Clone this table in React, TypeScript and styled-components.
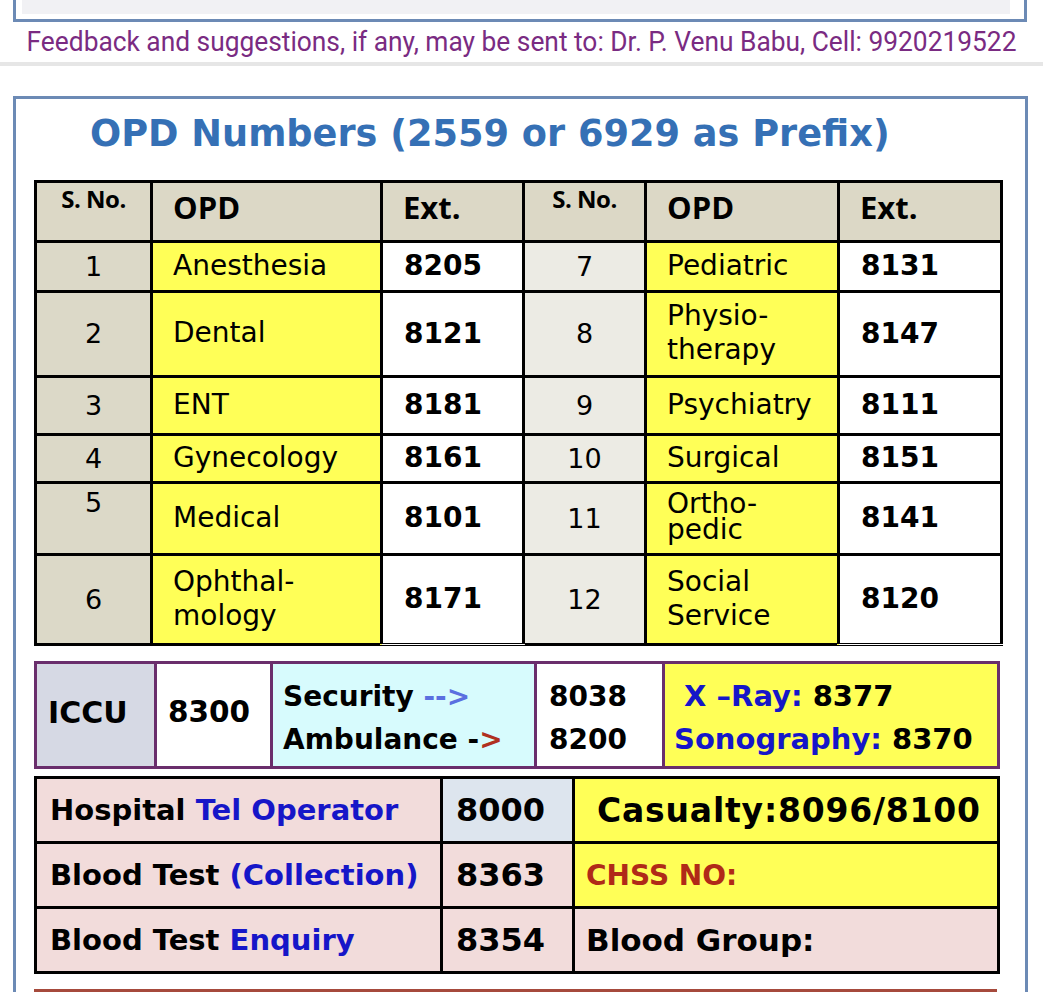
import React from "react";
import styled, { createGlobalStyle } from "styled-components";

const Global = createGlobalStyle`
  html, body {
    margin: 0;
    padding: 0;
    background: #ffffff;
    overflow: hidden;
  }
  body {
    font-family: "DejaVu Sans", Verdana, sans-serif;
    color: #000000;
  }
`;

const Page = styled.div`
  width: 1043px;
  height: 992px;
  overflow: hidden;
`;

const TopFrame = styled.div`
  margin: 0 16px 0 13px;
  border: 3px solid #6c8ab5;
  border-top: none;
  padding: 0 14px 5px 6px;
`;

const TopFill = styled.div`
  height: 14px;
  background: #f1f1f4;
`;

const Feedback = styled.div`
  height: 40px;
  display: flex;
  align-items: center;
  justify-content: center;
  overflow: hidden;
`;

const FeedbackText = styled.span`
  display: inline-block;
  font-family: "Roboto", "Liberation Sans", sans-serif;
  font-size: 28px;
  line-height: 32px;
  color: #7a2b82;
  white-space: nowrap;
  transform: scaleX(0.94);
  transform-origin: center;
`;

const Separator = styled.div`
  height: 4px;
  background: #e6e6e6;
`;

const Panel = styled.div`
  margin: 30px 15px 0 13px;
  border: 3px solid #6c8ab5;
  border-bottom: none;
  height: 900px;
  padding: 0 25px 0 18px;
`;

const Title = styled.h1`
  margin: 12px 0 0 56px;
  font-family: "DejaVu Sans", Verdana, sans-serif;
  font-weight: 700;
  font-size: 36.7px;
  line-height: 46px;
  color: #3570b5;
  white-space: nowrap;
`;

const OpdTable = styled.table`
  margin-top: 23px;
  width: 966px;
  border-collapse: collapse;
  table-layout: fixed;
  border: 3px solid #000;
`;

const Row = styled.tr<{ $h: number }>`
  height: ${(p) => p.$h}px;
`;

const HeadCell = styled.th<{ $small?: boolean }>`
  border: 3px solid #000;
  background: #dcd8c6;
  vertical-align: top;
  font-family: "Open Sans", "Noto Sans", sans-serif;
  font-weight: 700;
  text-align: ${(p) => (p.$small ? "center" : "left")};
  font-size: ${(p) => (p.$small ? "24px" : "31px")};
  line-height: ${(p) => (p.$small ? "30px" : "34px")};
  letter-spacing: ${(p) => (p.$small ? "-0.5px" : "0")};
  padding: ${(p) => (p.$small ? "1px 0 0 0" : "7px 0 0 20px")};
`;

const NumCell = styled.td<{ $light?: boolean; $top?: boolean }>`
  border: 3px solid #000;
  background: ${(p) => (p.$light ? "#ecebe4" : "#dcd9c8")};
  text-align: center;
  font-size: 27px;
  line-height: 30px;
  vertical-align: ${(p) => (p.$top ? "top" : "middle")};
  padding: ${(p) => (p.$top ? "4px 0 0 0" : "0")};
`;

const NameCell = styled.td<{ $tight?: boolean }>`
  border: 3px solid #000;
  background: #ffff57;
  font-size: 28px;
  line-height: ${(p) => (p.$tight ? "26px" : "34px")};
  padding: 0 0 ${(p) => (p.$tight ? "4px" : "2px")} 20px;
  white-space: pre-line;
`;

const ExtCell = styled.td<{ $last?: boolean }>`
  border: 3px solid #000;
  ${(p) => (p.$last ? "border-bottom: 3px double #000;" : "")}
  background: #ffffff;
  font-weight: 700;
  font-size: 28px;
  padding: 0 0 2px 21px;
`;

const ServiceTable = styled.table`
  margin-top: 15px;
  width: 963px;
  border-collapse: collapse;
  table-layout: fixed;
  border: 3px solid #6a2e6c;
`;

const ServiceCell = styled.td<{ $bg: string; $pad?: number; $size?: number; $lines?: boolean }>`
  height: 96px;
  border: 3px solid #6a2e6c;
  background: ${(p) => p.$bg};
  font-weight: 700;
  font-size: ${(p) => p.$size ?? 28}px;
  line-height: 43px;
  padding: ${(p) => (p.$lines ? "6px 0 0" : "0 0 6px")} ${(p) => p.$pad ?? 12}px;
  padding-right: 0;
  white-space: nowrap;
`;

const Arrow = styled.span<{ $color: string }>`
  color: ${(p) => p.$color};
`;

const Blue = styled.span`
  color: #1616c8;
`;

const ContactTable = styled.table`
  margin-top: 7px;
  width: 963px;
  border-collapse: collapse;
  table-layout: fixed;
  border: 3px solid #000;
`;

const ContactCell = styled.td<{ $bg: string; $size?: number; $pad?: number; $spacing?: number }>`
  height: 62px;
  border: 3px solid #000;
  background: ${(p) => p.$bg};
  font-weight: 700;
  font-size: ${(p) => p.$size ?? 29}px;
  letter-spacing: ${(p) => p.$spacing ?? 0}px;
  padding: 0 0 0 ${(p) => p.$pad ?? 13}px;
  white-space: nowrap;
`;

const Red = styled.span`
  color: #b02a18;
`;

const NextSection = styled.div`
  margin-top: 15px;
  width: 963px;
  border-top: 3px solid #a64a3c;
  height: 20px;
`;

const opdRows = [
  { h: 50, a: ["1", "Anesthesia", "8205"], b: ["7", "Pediatric", "8131"] },
  { h: 85, a: ["2", "Dental", "8121"], b: ["8", "Physio-\ntherapy", "8147"] },
  { h: 58, a: ["3", "ENT", "8181"], b: ["9", "Psychiatry", "8111"] },
  { h: 48, a: ["4", "Gynecology", "8161"], b: ["10", "Surgical", "8151"] },
  { h: 72, a: ["5", "Medical", "8101"], b: ["11", "Ortho-\npedic", "8141"], topA: true, tightB: true },
  { h: 90, a: ["6", "Ophthal-\nmology", "8171"], b: ["12", "Social\nService", "8120"], last: true },
];

export default function App() {
  return (
    <Page>
      <Global />
      <TopFrame>
        <TopFill />
      </TopFrame>
      <Feedback>
        <FeedbackText>
          Feedback and suggestions, if any, may be sent to: Dr. P. Venu Babu, Cell: 9920219522
        </FeedbackText>
      </Feedback>
      <Separator />
      <Panel>
        <Title>OPD Numbers (2559 or 6929 as Prefix)</Title>
        <OpdTable>
          <colgroup>
            <col style={{ width: 116 }} />
            <col style={{ width: 230 }} />
            <col style={{ width: 142 }} />
            <col style={{ width: 122 }} />
            <col style={{ width: 193 }} />
            <col style={{ width: 163 }} />
          </colgroup>
          <thead>
            <Row $h={60}>
              <HeadCell $small>S. No.</HeadCell>
              <HeadCell>OPD</HeadCell>
              <HeadCell>Ext.</HeadCell>
              <HeadCell $small>S. No.</HeadCell>
              <HeadCell>OPD</HeadCell>
              <HeadCell>Ext.</HeadCell>
            </Row>
          </thead>
          <tbody>
            {opdRows.map((r) => (
              <Row key={r.a[0]} $h={r.h}>
                <NumCell $top={r.topA}>{r.a[0]}</NumCell>
                <NameCell>{r.a[1]}</NameCell>
                <ExtCell $last={r.last}>{r.a[2]}</ExtCell>
                <NumCell $light>{r.b[0]}</NumCell>
                <NameCell $tight={r.tightB}>{r.b[1]}</NameCell>
                <ExtCell $last={r.last}>{r.b[2]}</ExtCell>
              </Row>
            ))}
          </tbody>
        </OpdTable>

        <ServiceTable>
          <colgroup>
            <col style={{ width: 120 }} />
            <col style={{ width: 116 }} />
            <col style={{ width: 264 }} />
            <col style={{ width: 128 }} />
            <col style={{ width: 335 }} />
          </colgroup>
          <tbody>
            <tr>
              <ServiceCell $bg="#d6d9e4" $pad={11} $size={30}>ICCU</ServiceCell>
              <ServiceCell $bg="#ffffff" $pad={11} $size={29.5}>8300</ServiceCell>
              <ServiceCell $bg="#d7fbfd" $pad={10} $lines>
                Security <Arrow $color="#5b6fe0">--&gt;</Arrow>
                <br />
                Ambulance -<Arrow $color="#b03020">&gt;</Arrow>
              </ServiceCell>
              <ServiceCell $bg="#ffffff" $pad={12} $lines>
                8038
                <br />
                8200
              </ServiceCell>
              <ServiceCell $bg="#ffff57" $pad={9} $size={29} $lines>
                <Blue>&nbsp;X –Ray:</Blue> 8377
                <br />
                <Blue>Sonography:</Blue> 8370
              </ServiceCell>
            </tr>
          </tbody>
        </ServiceTable>

        <ContactTable>
          <colgroup>
            <col style={{ width: 406 }} />
            <col style={{ width: 132 }} />
            <col style={{ width: 425 }} />
          </colgroup>
          <tbody>
            <tr>
              <ContactCell $bg="#f2dcdb">
                Hospital <Blue>Tel Operator</Blue>
              </ContactCell>
              <ContactCell $bg="#dde5ee" $size={32}>8000</ContactCell>
              <ContactCell $bg="#ffff57" $size={33} $pad={22} $spacing={0.8}>
                Casualty:8096/8100
              </ContactCell>
            </tr>
            <tr>
              <ContactCell $bg="#f2dcdb">
                Blood Test <Blue>(Collection)</Blue>
              </ContactCell>
              <ContactCell $bg="#f2dcdb" $size={32}>8363</ContactCell>
              <ContactCell $bg="#ffff57" $size={28} $pad={11}>
                <Red>CHSS NO:</Red>
              </ContactCell>
            </tr>
            <tr>
              <ContactCell $bg="#f2dcdb">
                Blood Test <Blue>Enquiry</Blue>
              </ContactCell>
              <ContactCell $bg="#f2dcdb" $size={32}>8354</ContactCell>
              <ContactCell $bg="#f2dcdb" $size={31} $pad={11}>
                Blood Group:
              </ContactCell>
            </tr>
          </tbody>
        </ContactTable>
        <NextSection />
      </Panel>
    </Page>
  );
}
